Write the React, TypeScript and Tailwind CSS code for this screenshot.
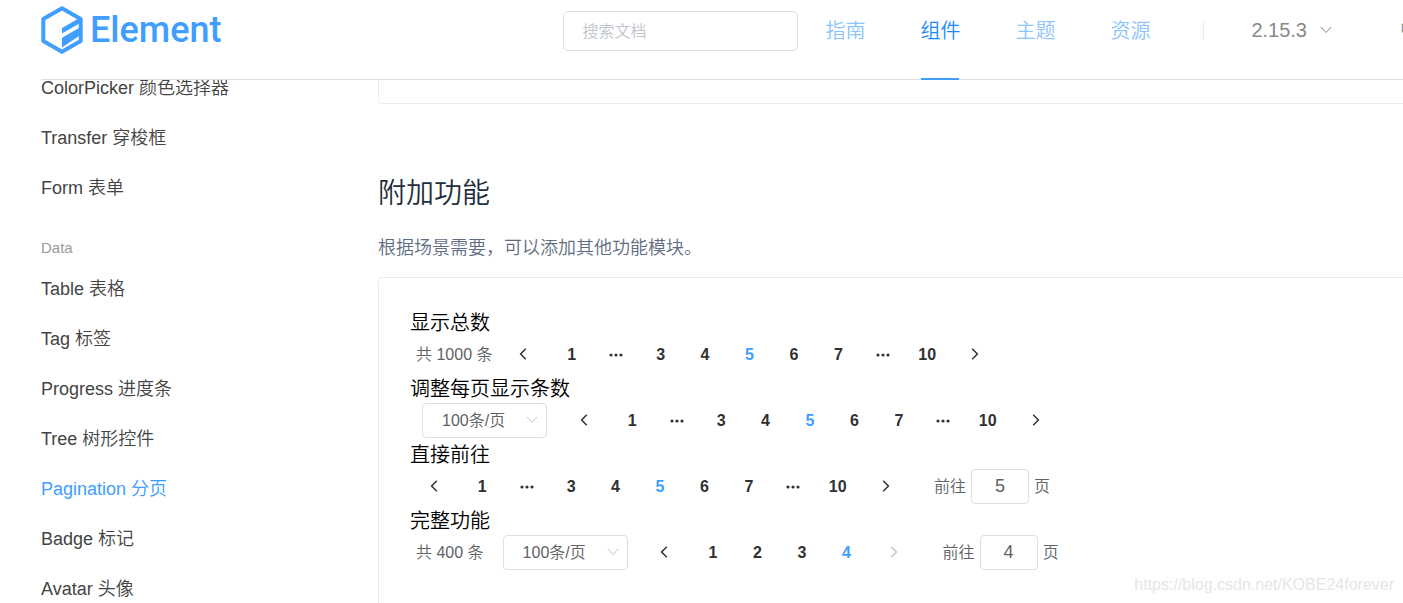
import type { ReactNode } from "react";

const CJK = "font-['Liberation_Sans','Noto_Sans_CJK_SC',sans-serif]";

function LogoMark() {
  return (
    <svg width="42" height="48" viewBox="0 0 42 48" aria-hidden="true">
      <path d="M21 2.3 39.7 13v22L21 45.7 2.3 35V13Z" fill="none" stroke="#409eff" strokeWidth="4" strokeLinejoin="round" />
      <path d="M21 22 38 12.200v5.500L21 27.500Z M21 31.800 38 22v8L21 41.500Z" fill="#409eff" />
    </svg>
  );
}

function Chevron({ dir, className = "" }: { dir: "left" | "right" | "down"; className?: string }) {
  if (dir === "down") {
    return (
      <svg className={className} width="12" height="8" viewBox="0 0 12 8" fill="none" stroke="currentColor" strokeWidth="1" aria-hidden="true">
        <path d="M0.800 1 6 6.500 11.200 1" />
      </svg>
    );
  }
  return (
    <svg className={className} width="8" height="12" viewBox="0 0 8 12" fill="none" stroke="currentColor" strokeWidth="1.500" aria-hidden="true">
      <path d={dir === "left" ? "M6.800 0.800 1.600 6 6.800 11.200" : "M1.200 0.800 6.400 6 1.200 11.200"} />
    </svg>
  );
}

function Dots() {
  return (
    <svg width="14" height="4" viewBox="0 0 14 4" fill="currentColor" aria-hidden="true">
      <circle cx="2" cy="2" r="1.600" />
      <circle cx="7" cy="2" r="1.600" />
      <circle cx="12" cy="2" r="1.600" />
    </svg>
  );
}

function Total({ count }: { count: number }) {
  return <span className="mr-[13px]">共 {count} 条</span>;
}

function Sizes() {
  return (
    <span className="relative mr-[19px] ml-[6px] flex">
      <select aria-label="每页条数" defaultValue="100" className="h-[35px] w-[125px] appearance-none rounded border border-[#dcdfe6] bg-white pl-[19px] text-base text-[#606266]">
        <option value="100">100条/页</option>
        <option value="200">200条/页</option>
        <option value="300">300条/页</option>
        <option value="400">400条/页</option>
      </select>
      <Chevron dir="down" className="pointer-events-none absolute top-[13px] right-[9px] text-[#c0c4cc]" />
    </span>
  );
}

function Pager({ pages, current, atEnd = false }: { pages: (number | "more")[]; current: number; atEnd?: boolean }) {
  return (
    <>
      <button aria-label="上一页" className="flex h-[35px] w-11 items-center justify-center pr-[9px] pb-[2px] text-[#303133]">
        <Chevron dir="left" />
      </button>
      <ul className={`flex font-bold text-[#303133] ${pages.length > 4 ? "w-[400px]" : "w-[178px]"}`}>
        {pages.map((p, i) => (
          <li key={i} className="flex-1">
            {p === "more" ? (
              <button aria-label="更多页" className="flex h-[35px] w-full items-center justify-center">
                <Dots />
              </button>
            ) : (
              <button className={`flex h-[35px] w-full items-center justify-center ${p === current ? "text-[#409eff]" : ""}`}>{p}</button>
            )}
          </li>
        ))}
      </ul>
      <button aria-label="下一页" disabled={atEnd} className="flex h-[35px] w-11 items-center justify-center pb-[2px] pl-[7px] text-[#303133] disabled:text-[#c0c4cc]">
        <Chevron dir="right" />
      </button>
    </>
  );
}

function Jumper({ page }: { page: number }) {
  return (
    <label className="ml-[30px] flex items-center gap-[5px]">
      前往
      <input type="text" defaultValue={page} className="h-[35px] w-[58px] rounded border border-[#dcdfe6] text-center text-lg text-[#606266]" />
      页
    </label>
  );
}

function Block({ title, children }: { title: string; children: ReactNode }) {
  return (
    <div>
      <h3 className="text-xl/[27px] text-black">{title}</h3>
      <div className="flex items-center px-[6px] pb-1 text-base/[35px] whitespace-nowrap text-[#606266]">{children}</div>
    </div>
  );
}

const formLinks = ["ColorPicker 颜色选择器", "Transfer 穿梭框", "Form 表单"];
const dataLinks = ["Table 表格", "Tag 标签", "Progress 进度条", "Tree 树形控件", "Pagination 分页", "Badge 标记", "Avatar 头像"];
const navLinks = ["指南", "组件", "主题", "资源"];
const manyPages: (number | "more")[] = [1, "more", 3, 4, 5, 6, 7, "more", 10];

function SideLinks({ items }: { items: string[] }) {
  return (
    <ul>
      {items.map((t) => (
        <li key={t}>
          <a href="#" className={`block text-lg/[50px] ${t.startsWith("Pagination") ? "text-[#409eff]" : "text-[#444]"}`}>
            {t}
          </a>
        </li>
      ))}
    </ul>
  );
}

export default function App() {
  return (
    <div className={`relative flex h-screen flex-col overflow-hidden bg-white font-[350] ${CJK}`}>
      <header className="ml-[41px] flex h-20 shrink-0 items-start border-b border-[#dcdfe6]">
        <a href="#" className="flex items-center pt-[6px] text-[#409eff]">
          <LogoMark />
          <span className="ml-[7px] font-[Roboto] text-[36px]/[48px] font-medium">Element</span>
        </a>
        <div className="flex-1" />
        <input type="text" aria-label="搜索文档" placeholder="搜索文档" className="mt-[11px] h-10 w-[235px] rounded-[5px] border border-[#dcdfe6] px-[18px] pt-[2px] text-base placeholder:text-[#c0c4cc]" />
        <nav className="ml-[27px] flex gap-[55px] text-xl/[62px]">
          {navLinks.map((t) => (
            <a key={t} href="#" className={`h-20 ${t === "组件" ? "text-[#1989fa]" : "text-[#8cc4fc]"}`}>
              {t}
              {t === "组件" && <span className="mx-px mt-4 block h-[2px] bg-[#409eff]" />}
            </a>
          ))}
        </nav>
        <div className="mt-5 ml-[53px] h-5 w-px bg-[#ebebeb]" />
        <button className="ml-[47px] flex h-[60px] items-center gap-[13px] text-xl text-[#888]">
          2.15.3
          <Chevron dir="down" />
        </button>
        <button className="-mr-[15px] ml-[68px] h-[60px] shrink-0 text-lg text-[#888]">中</button>
      </header>

      <div className="flex min-h-0 flex-1 overflow-hidden pl-[41px]">
        <aside className="-mt-[17px] w-[337px] shrink-0">
          <SideLinks items={formLinks} />
          <div className="mt-[19px] text-[15px]/[32px] text-[#999]">Data</div>
          <SideLinks items={dataLinks} />
        </aside>
        <main className="min-w-0 flex-1">
          <div className="-mr-2 h-6 rounded-b border border-t-0 border-[#ebebeb]" />
          <h2 className="mt-[72px] text-[28px]/[36px] text-[#1f2f3d]">附加功能</h2>
          <p className="mt-[22px] text-lg/[28px] text-[#5e6d82]">根据场景需要，可以添加其他功能模块。</p>
          <section className="mt-[15px] -mr-2 h-[400px] rounded border border-[#ebebeb] px-[31px] pt-8">
            <Block title="显示总数">
              <Total count={1000} />
              <Pager pages={manyPages} current={5} />
            </Block>
            <Block title="调整每页显示条数">
              <Sizes />
              <Pager pages={manyPages} current={5} />
            </Block>
            <Block title="直接前往">
              <Pager pages={manyPages} current={5} />
              <Jumper page={5} />
            </Block>
            <Block title="完整功能">
              <Total count={400} />
              <Sizes />
              <Pager pages={[1, 2, 3, 4]} current={4} atEnd />
              <Jumper page={4} />
            </Block>
          </section>
        </main>
      </div>
      <div className="pointer-events-none absolute right-[9px] bottom-[6px] text-base text-[#e6e6e6]">https://blog.csdn.net/KOBE24forever</div>
    </div>
  );
}
